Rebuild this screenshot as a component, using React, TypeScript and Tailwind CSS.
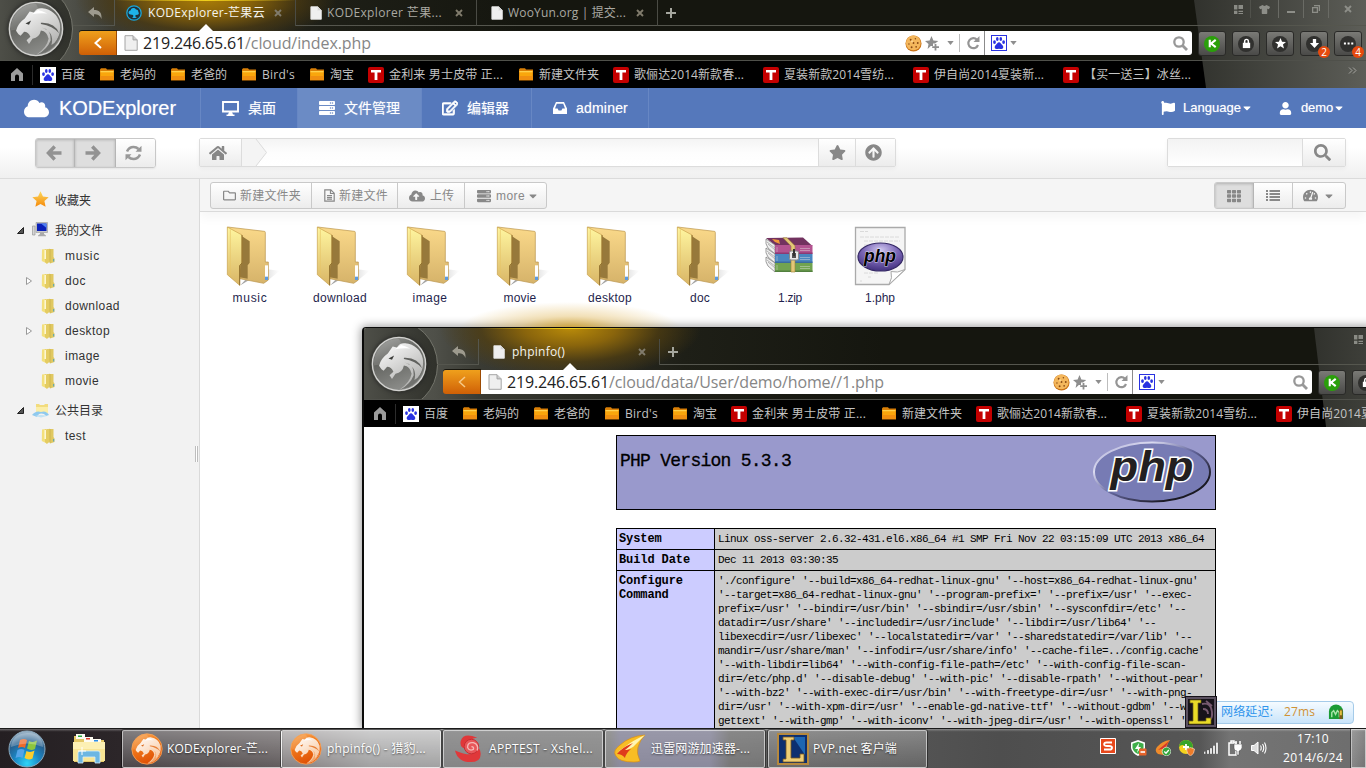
import React, { useLayoutEffect, useRef, useState } from "react";
import {
  FaArrowCircleUp, FaCaretDown, FaCloud, FaCloudUploadAlt, FaFlag, FaHome,
  FaInbox, FaRegEdit, FaRegFolder, FaSearch, FaServer, FaStar,
  FaTachometerAlt, FaTh, FaUser, FaTshirt,
} from "react-icons/fa";

const UI = "font-['Open_Sans','Noto_Sans_CJK_SC',sans-serif]";
const ARIAL = "font-['Liberation_Sans','Noto_Sans_CJK_SC',sans-serif]";

/** One line of text whose letter spacing is adjusted so that it fills a given width. */
function Fit({ w, className = "", children }: { w: number; className?: string; children: string }) {
  const ref = useRef<HTMLSpanElement>(null);
  const [gap, setGap] = useState(0);
  useLayoutEffect(() => {
    const el = ref.current;
    if (!el) return;
    el.style.letterSpacing = "0px";
    const natural = el.getBoundingClientRect().width;
    setGap((w - natural) / Array.from(children).length);
    el.style.letterSpacing = `${(w - natural) / Array.from(children).length}px`;
  }, [w, children]);
  return (
    <span ref={ref} className={`inline-block shrink-0 whitespace-pre ${className}`} style={{ letterSpacing: `${gap}px` }}>
      {children}
    </span>
  );
}

/* ---------- browser icons ---------- */

function BeastLogo({ id, size, orange = false }: { id: string; size: string; orange?: boolean }) {
  return (
    <svg viewBox="0 0 160 160" className={size}>
      <defs>
        <linearGradient id={`${id}a`} x1="0" y1="0" x2="0.4" y2="1">
          <stop offset="0" stopColor={orange ? "#f9b060" : "#a0a19e"} />
          <stop offset="0.45" stopColor={orange ? "#f07a1c" : "#62635f"} />
          <stop offset="1" stopColor={orange ? "#e05206" : "#8a8b88"} />
        </linearGradient>
        <linearGradient id={`${id}b`} x1="0" y1="0" x2="0.6" y2="1">
          <stop offset="0" stopColor="#ffffff" />
          <stop offset="1" stopColor={orange ? "#f8c69c" : "#b0b0ae"} />
        </linearGradient>
      </defs>
      <circle cx="80" cy="80" r="76" fill={`url(#${id}a)`} stroke={orange ? "#f6a55c" : "#d2d2d0"} strokeWidth="4" />
      <path d="M80 8 A72 72 0 0 0 8 84 Q60 80 96 42 Z" fill="#fff" opacity="0.13" />
      <path
        d="M30 95 L23 85 Q28 64 48 50 L62 30 L74 33 Q82 19 98 21 Q138 26 148 64 Q154 104 120 134 Q104 148 82 153 Q112 132 116 108 Q112 86 94 84 Q90 104 70 108 L60 123 L53 112 L64 102 Q58 88 46 88 L36 99 Z"
        fill={`url(#${id}b)`}
      />
      <path d="M94 62 Q134 60 146 92 Q128 72 94 66Z" fill={orange ? "#e8813a" : "#60615e"} />
      <path d="M96 76 Q124 82 122 112 Q112 138 84 153 Q144 142 152 82 Q140 120 124 126 Q134 88 96 76Z" fill={orange ? "#f3a468" : "#70716e"} />
      <path d="M50 64 L66 56 L60 68Z" fill={orange ? "#d9600f" : "#3c3d3a"} />
      <path d="M68 38 L86 26 Q100 30 112 36 Q92 34 68 38Z" fill="#fff" />
    </svg>
  );
}

function PageIcon({ className, stroke = "#8f8f8f" }: { className: string; stroke?: string }) {
  return (
    <svg viewBox="0 0 14 16" className={className}>
      <path d="M1 .7h8l4.2 4.2v10.4H1z" fill="#efefef" stroke={stroke} />
      <path d="M9 .7v4.2h4.2" fill="#cfcfcf" stroke={stroke} />
    </svg>
  );
}

function PawIcon({ boxed = false }: { boxed?: boolean }) {
  return (
    <svg viewBox="0 0 16 16" className="size-4 shrink-0">
      <rect x=".5" y=".5" width="15" height="15" fill="#fff" stroke={boxed ? "#2932e1" : "#fff"} />
      <g fill="#2932e1">
        <ellipse cx="3.5" cy="7.1" rx="1.4" ry="1.9" />
        <ellipse cx="6.3" cy="4" rx="1.3" ry="1.9" />
        <ellipse cx="9.8" cy="4" rx="1.3" ry="1.9" />
        <ellipse cx="12.6" cy="7.1" rx="1.4" ry="1.9" />
        <path d="M8 7.2c1.6 0 1.8 1.6 3.2 2.7 1.5 1.2 1.6 3.6-.6 4-1.1.2-1.6-.2-2.6-.2s-1.5.4-2.6.2c-2.2-.4-2.1-2.800-.6-4C6.200 8.800 6.400 7.200 8 7.200z" />
      </g>
    </svg>
  );
}

function BookFolder() {
  return (
    <svg viewBox="0 0 14 13" className="h-[13px] w-[14px] shrink-0">
      <path d="M0 1.500L1 .3h5l1 1.200h7v11H0z" fill="#d97f06" />
      <path d="M.5 3h13v9H.5z" fill="#f9a60c" />
      <path d="M.5 3h13v1.300H.5z" fill="#ffd04a" />
      <path d="M.5 8h13v4H.5z" fill="#f08f10" />
    </svg>
  );
}

function TIcon() {
  return (
    <span className="flex size-4 shrink-0 items-center justify-center rounded-[2px] bg-[#c40000]">
      <svg viewBox="0 0 10 10" className="size-[10px]"><path d="M0 0h10v2.600H6.400V10H3.600V2.600H0z" fill="#fff" /></svg>
    </span>
  );
}

function CookieIcon() {
  return (
    <svg viewBox="0 0 18 18" className="size-[17px] shrink-0">
      <circle cx="9" cy="9" r="8.500" fill="#c97216" />
      <circle cx="8.800" cy="8.400" r="7.800" fill="#f4b75c" />
      <g fill="#8a4a14">
        <circle cx="6" cy="5" r="1" /><circle cx="11" cy="4" r=".8" /><circle cx="9" cy="8.500" r="1" />
        <circle cx="4.200" cy="9.500" r=".8" /><circle cx="13.500" cy="8.500" r="1" /><circle cx="7" cy="13" r="1" /><circle cx="11.800" cy="12.500" r=".9" />
      </g>
      <circle cx="7.500" cy="6.800" r="1.200" fill="#fbd28c" />
    </svg>
  );
}

function CloseX({ color = "#807b6c" }: { color?: string }) {
  return (
    <svg viewBox="0 0 8 8" className="size-2 shrink-0"><path d="M1 1l6 6M7 1L1 7" stroke={color} strokeWidth="1.900" /></svg>
  );
}

function Down({ className = "" }: { className?: string }) {
  return <svg viewBox="0 0 8 5" className={`h-[4px] w-[7px] shrink-0 ${className}`}><path d="M0 0h8L4 5z" fill="#8e8e8e" /></svg>;
}

function RoundButton({ children, green = false, badge }: { children: React.ReactNode; green?: boolean; badge?: string }) {
  return (
    <div className="relative flex h-[25px] w-7 shrink-0 items-center justify-center rounded-[3px] border border-[#2a2a28] bg-linear-to-b from-[#7a7a76] to-[#4a4a48]">
      <div className={`flex size-[16px] items-center justify-center rounded-full ${green ? "bg-[#2a9f0a]" : "bg-[#30302e]"}`}>
        <svg viewBox="0 0 12 12" className="size-[11px]">{children}</svg>
      </div>
      {badge && (
        <span className="absolute top-[14px] left-[17px] flex size-3 items-center justify-center rounded-full bg-[#e64a0e] font-['Open_Sans',sans-serif] text-[10px] leading-none text-white">
          {badge}
        </span>
      )}
    </div>
  );
}

/* ---------- browser chrome ---------- */

type Tab = { title: string; width: number; kind: "cloud" | "page"; active?: boolean };
type Mark = { title: string; width: number; cell: string; kind: "paw" | "folder" | "t"; inset?: string };

const MARKS: Mark[] = [
  { title: "百度", width: 24, cell: "w-[60px]", kind: "paw" },
  { title: "老妈的", width: 36, cell: "w-[71px]", kind: "folder" },
  { title: "老爸的", width: 36, cell: "w-[71px]", kind: "folder" },
  { title: "Bird's", width: 33, cell: "w-[68px]", kind: "folder" },
  { title: "淘宝", width: 24, cell: "w-[58px]", kind: "folder" },
  { title: "金利来 男士皮带 正...", width: 114, cell: "w-[151px]", kind: "t" },
  { title: "新建文件夹", width: 60, cell: "w-[94px]", kind: "folder" },
  { title: "歌俪达2014新款春...", width: 110, cell: "w-[150px]", kind: "t" },
  { title: "夏装新款2014雪纺...", width: 110, cell: "w-[150px]", kind: "t" },
  { title: "伊自尚2014夏装新...", width: 110, cell: "w-[150px]", kind: "t" },
  { title: "【买一送三】冰丝...", width: 107, cell: "w-[140px]", kind: "t" },
];

function Chrome({ id, tabs, host, hostW, path, pathW, floating = false }: {
  id: string; tabs: Tab[]; host: string; hostW: number; path: string; pathW: number; floating?: boolean;
}) {
  const marks = floating ? MARKS.slice(0, -1) : MARKS;
  return (
    <div className={`relative isolate flex shrink-0 flex-col overflow-hidden bg-[#15160f] ${UI} ${floating ? "h-[99px]" : "h-[88px]"}`}>
      {/* backdrop */}
      <div className={`absolute inset-x-0 top-0 -z-10 bg-[linear-gradient(90deg,#5b5c55_0px,#4f5049_70px,#3a3b34_115px,#1e1f17_320px,#15160f_520px)] ${floating ? "h-[72px]" : "h-[61px]"}`} />
      <div className={`absolute left-[75px] top-0 -z-10 w-[262px] ${floating ? "h-[50px] bg-[radial-gradient(ellipse_50%_100%_at_50%_0,#b98b0a_0%,#8a650c_35%,#54400fb0_68%,transparent_100%)]" : "h-[38px] bg-[radial-gradient(ellipse_50%_115%_at_50%_0,#a87c08_0%,#86610a_35%,#4e3b0fb0_70%,transparent_100%)]"}`} />
      <div className="absolute left-[115px] top-0 -z-10 h-px w-[182px] bg-[linear-gradient(90deg,transparent,#f0cf1c_50%,transparent)]" />
      {/* logo well */}
      <div className={`absolute -z-10 size-[92px] rounded-full border border-[#74756c] bg-linear-to-r from-[#55564f] to-[#30312b] ${floating ? "left-[-18px] top-[-9px]" : "-left-[19px] -top-[17px]"}`} />
      <div className="absolute inset-x-0 bottom-0 -z-10 h-[27px] bg-black" />
      <div className="absolute right-0 top-0 -z-10 h-full w-[172px] bg-linear-to-r from-[#31322d] to-[#5d5e58] [clip-path:polygon(0_0,100%_0,100%_100%,7%_100%)]" />
      <div className="absolute inset-x-0 bottom-[27px] -z-10 h-px bg-[#4f504a]" />
      <div className={`absolute z-10 size-[56px] rounded-full shadow-[0_0_4px_#222] ${floating ? "left-[7px] top-[8px]" : "left-2 top-px"}`}>
        <BeastLogo id={id} size="size-[56px]" />
      </div>

      {/* tab strip */}
      <div className={`flex shrink-0 ${floating ? "h-[37px] pt-[11px]" : "h-[26px]"}`}>
        <div className="ml-[73px] flex w-[42px] items-center justify-center border-r border-b border-[#55564e] pl-[3px]">
          <svg viewBox="0 0 14 12" className="h-3 w-[14px]">
            <path d="M0 5L6 0v3c5 0 8 2 7.500 9C12 8.500 10 7.300 6 7.300V10z" fill="#9d9a8e" />
          </svg>
        </div>
        {tabs.map((t) => (
          <div key={t.title} className={`flex w-[181px] shrink-0 items-center border-r border-[#4a4b44] ${t.active ? "" : "border-b border-b-[#55564e]"}`}>
            {t.kind === "cloud" ? (
              <svg viewBox="0 0 16 16" className="ml-[11px] size-4 shrink-0">
                <circle cx="8" cy="8" r="7.200" fill="#20313a" stroke="#1aa5d8" strokeWidth="1.300" />
                <path d="M4.500 9.500a2 2 0 010-4A3 3 0 0110 4.500a2.400 2.400 0 012.300 2.600A1.500 1.500 0 0111.800 9.700L9.500 10v2l1.500 1H6l1.200-1V10z" fill="#1db2ea" />
              </svg>
            ) : (
              <PageIcon className="ml-[14px] h-[14px] w-3 shrink-0" stroke="#e8e8e8" />
            )}
            <Fit w={t.width} className={`text-[12px] leading-4 ${t.kind === "page" && !floating ? "ml-[5px]" : floating ? "ml-[7px]" : "ml-[6px]"} ${t.active ? "text-[#f4f4f0]" : "text-[#aaa9a2]"}`}>{t.title}</Fit>
            <div className="mr-[13px] ml-auto"><CloseX /></div>
          </div>
        ))}
        <div className="flex grow items-center border-b border-[#55564e] pl-2">
          <svg viewBox="0 0 10 10" className="size-[10px]"><path d="M5 0v10M0 5h10" stroke="#a5a69e" strokeWidth="2" /></svg>
        </div>
      </div>

      {/* window controls */}
      <div className={`absolute right-0 flex items-center ${floating ? "top-[2px]" : "top-0"}`}>
        <div className="flex h-[18px] w-[25px] items-center justify-center border-r border-[#50514b]">
          <svg viewBox="0 0 8 8" className="size-[9px]"><path d="M0 0h3v4H0zM4 0h4v3.500H4zM0 5h3v3H0zM4 5h4v1.200H4zM4 7h4v1H4z" fill="#8a8b85" /></svg>
        </div>
        <div className="flex h-[18px] w-[28px] items-center justify-center border-r border-[#6a6b65] text-[#8d8e88]"><FaTshirt className="size-[11px]" /></div>
        <div className="flex h-[18px] w-[25px] items-center justify-center border-r border-[#6a6b65]"><div className="mt-[6px] h-[2px] w-2 bg-[#8d8e88]" /></div>
        <div className="flex h-[18px] w-[25px] items-center justify-center border-r border-[#6a6b65]">
          <svg viewBox="0 0 8 8" className="size-2"><path d="M2 .6h5.400V6M.6 2.600h4.800v4.800H.6z" fill="none" stroke="#8d8e88" strokeWidth="1.300" /></svg>
        </div>
        <div className="flex h-[18px] w-[37px] items-center justify-center"><CloseX color="#8d8e88" /></div>
      </div>

      {/* address row */}
      <div className="flex h-[35px] shrink-0 pt-[5px]">
        <div className="relative ml-[79px] flex h-6 w-[38px] items-center justify-center rounded-l-[3px] border-r border-[#9c4a03] bg-linear-to-b from-[#efa01c] to-[#cf5f06] shadow-[0_-1px_0_#191710]">
          <svg viewBox="0 0 8 12" className="h-3 w-2"><path d="M7 1L1.500 6L7 11" fill="none" stroke={floating ? "#f6c987" : "#fff"} strokeWidth={floating ? 1.500 : 2} /></svg>
          <svg viewBox="0 0 16 8" className="absolute -top-[7px] left-[119px] h-2 w-4"><path d="M0 8L8 0l8 8z" fill="#fff" /></svg>
        </div>
        <div className="flex h-6 grow items-center rounded-r-[3px] bg-white">
          <PageIcon className="ml-[7px] h-4 w-[14px] shrink-0" stroke="#a4a4a4" />
          <Fit w={hostW} className="ml-[5px] text-[16px] leading-6 text-[#222]">{host}</Fit>
          <Fit w={pathW} className="text-[16px] leading-6 text-[#868686]">{path}</Fit>
          <div className="ml-auto flex h-full items-center">
            <CookieIcon />
            <svg viewBox="0 0 15 15" className="ml-[3px] size-[15px]">
              <path d="M6.500 0l1.900 4.600 4.900.4-3.300 2.500h-2v2.500H5.800L2.600 13l.9-5L0 5l4.600-.4z" fill="#8e8e8e" />
              <path d="M10.500 8v6.500M7.200 11.200H14" stroke="#8e8e8e" strokeWidth="1.800" />
            </svg>
            <Down className="ml-[7px]" />
            <div className="ml-[5px] h-[18px] w-px bg-[#bdbdbd]" />
            <svg viewBox="0 0 14 14" className="ml-[6px] size-[14px]">
              <path d="M11 3.800A5 5 0 1 0 12 9" fill="none" stroke="#959595" strokeWidth="2.200" />
              <path d="M13.500 0v6H7.500z" fill="#959595" />
            </svg>
          </div>
          <div className={`ml-[4px] flex h-full shrink-0 items-center border-l border-[#8b8b8b] ${floating ? "w-[180px]" : "w-[208px]"}`}>
            <div className="ml-[6px]"><PawIcon boxed /></div>
            <Down className="ml-[3px]" />
            <svg viewBox="0 0 15 15" className="mr-[4px] ml-auto size-[15px]">
              <circle cx="6" cy="6" r="4.700" fill="none" stroke="#989898" strokeWidth="2.300" /><path d="M9.500 9.500L14 14" stroke="#989898" strokeWidth="2.800" />
            </svg>
          </div>
        </div>
        <div className="flex gap-[6px] pr-1 pl-[6px]">
          <RoundButton green><path d="M3 2v8M9.500 2L4.500 6l5 4" fill="none" stroke="#fff" strokeWidth="2.300" /></RoundButton>
          <RoundButton><path d="M2 5.200h8V11H2z" fill="#fff" /><path d="M4 6V3.500a2 2 0 014 0V6" fill="none" stroke="#fff" strokeWidth="1.600" /></RoundButton>
          <RoundButton><path d="M6 0l1.700 4 4.300.3-3.300 2.700L9.800 11.500 6 9l-3.800 2.500L3.300 7 0 4.300 4.300 4z" fill="#fff" /></RoundButton>
          <RoundButton badge={floating ? undefined : "2"}><path d="M4.200 1h3.600v4.500H11L6 11 1 5.500h3.200z" fill="#fff" /></RoundButton>
          <RoundButton badge={floating ? undefined : "4"}><path d="M1 5h2.200v2.200H1zM5 5h2.200v2.200H5zM9 5h2.200v2.200H9z" fill="#fff" /></RoundButton>
        </div>
      </div>

      {/* bookmark row */}
      <div className={`relative flex h-[27px] shrink-0 items-center ${floating ? "-ml-px" : ""}`}>
        <svg viewBox="0 0 12 13" className="ml-[11px] h-[13px] w-3 shrink-0"><path d="M6 0l6 5.500V13H8V8.500a2 2 0 00-4 0V13H0V5.500z" fill="#9b9b9b" /></svg>
        <div className="mr-[7px] ml-[9px] h-5 w-px shrink-0 bg-[#2c2c2c]" />
        {marks.map((m) => (
          <div key={m.title} className={`flex shrink-0 items-center ${m.cell}`}>
            {m.kind === "paw" ? <PawIcon /> : m.kind === "folder" ? <BookFolder /> : <TIcon />}
            <Fit w={m.width} className={`text-[12px] leading-4 text-[#c4c4c4] ${m.kind === "folder" ? "ml-[6px]" : "ml-[5px]"}`}>{m.title}</Fit>
          </div>
        ))}
        <svg viewBox="0 0 9 7" className="absolute top-[6px] right-[9px] h-[7px] w-[9px]"><path d="M1 .5l3 3-3 3M5 .5l3 3-3 3" fill="none" stroke="#a5a5a0" /></svg>
      </div>
    </div>
  );
}

/* ---------- file manager ---------- */

function NavBar() {
  const item = "flex h-full shrink-0 items-center border-r border-[#6787c4]";
  return (
    <div className={`flex h-10 shrink-0 items-center bg-[#5578bb] text-[14px] text-white [text-shadow:0_0_1px_rgba(255,255,255,.5)] ${ARIAL}`}>
      <div className={`${item} w-[201px]`}>
        <FaCloud className="ml-6 size-[25px]" />
        <Fit w={117} className="ml-[10px] text-[20px]">KODExplorer</Fit>
      </div>
      <div className={`${item} w-[97px]`}>
        <svg viewBox="0 0 17 15" className="ml-[21px] h-[15px] w-[17px]"><path d="M1 1h15v9.500H1z" fill="none" stroke="#fff" strokeWidth="1.900" /><path d="M7 11h3l1 2.500h1.500V15h-8v-1.500H6z" fill="#fff" /></svg>
        <Fit w={28} className="ml-[9px]">桌面</Fit>
      </div>
      <div className={`${item} w-[124px] bg-[#6b8bc5]`}>
        <FaServer className="ml-[21px] size-[16px]" />
        <Fit w={56} className="ml-[9px]">文件管理</Fit>
      </div>
      <div className={`${item} w-[110px]`}>
        <FaRegEdit className="ml-[20px] size-[16px] stroke-white stroke-[30]" />
        <Fit w={42} className="ml-[9px]">编辑器</Fit>
      </div>
      <div className={`${item} w-[117px]`}>
        <svg viewBox="0 0 14 12" className="ml-[21px] h-3 w-[14px]"><path d="M3 0h8l3 6.500V12H0V6.500zM3.800 1.800L2 6.500h2.600l1 2h2.800l1-2H12L10.200 1.800z" fill="#fff" fillRule="evenodd" /></svg>
        <Fit w={52} className="ml-[9px]">adminer</Fit>
      </div>
      <div className="ml-auto flex items-center pr-[21px] text-[13px]">
        <FaFlag className="size-[14px]" />
        <Fit w={58} className="ml-[8px]">Language</Fit>
        <FaCaretDown className="size-[12px]" />
        <FaUser className="ml-[26px] size-[13px]" />
        <Fit w={32} className="ml-[9px]">demo</Fit>
        <FaCaretDown className="size-[12px]" />
      </div>
    </div>
  );
}

const GREY = "bg-linear-to-b from-white to-[#ececec]";

function ThickArrow({ flip = false }: { flip?: boolean }) {
  return (
    <svg viewBox="0 0 16 16" className={`size-4 ${flip ? "-scale-x-100" : ""}`}>
      <path d="M8.700 1.500L2.500 8l6.200 6.500M3 8h12.500" fill="none" stroke="#929292" strokeWidth="3.500" />
    </svg>
  );
}

function PathBar() {
  return (
    <div className="flex h-[51px] shrink-0 items-start border-b border-[#dcdcdc] bg-linear-to-b from-white from-40% to-[#f0f0f0] pt-[10px] text-[#888]">
      <div className="ml-[35px] flex h-[30px] w-[121px] overflow-hidden rounded-[3px] border border-[#c8c8c8] shadow-[0_1px_2px_#0001] [&>div]:flex [&>div]:flex-1 [&>div]:items-center [&>div]:justify-center">
        <div className="border-r border-[#b5b5b5] bg-[#dedede] pr-[2px] shadow-[inset_0_1px_3px_#0003]"><ThickArrow /></div>
        <div className="border-r border-[#b5b5b5] bg-[#dedede] pr-[3px] shadow-[inset_0_1px_3px_#0003]"><ThickArrow flip /></div>
        <div className={`pr-[3px] ${GREY}`}>
          <svg viewBox="0 0 17 16" className="h-4 w-[17px]">
            <path d="M2 6.500Q4 2 8.500 2q3 0 5 2M15 9.500Q13 14 8.500 14q-3 0-5-2" fill="none" stroke="#999" strokeWidth="2.600" />
            <path d="M16.500 .8v6h-6zM.5 15.200v-6h6z" fill="#999" />
          </svg>
        </div>
      </div>
      <div className="ml-[43px] flex h-[29px] w-[697px] rounded-[2px] border border-[#dcdcdc] shadow-[0_2px_4px_#0000000a]">
        <div className={`flex w-[42px] items-center justify-center border-r border-[#dcdcdc] pr-[5px] ${GREY}`}><FaHome className="size-[18px]" /></div>
        <div className="flex grow bg-linear-to-b from-[#f4f4f4] via-[#fdfdfd] to-white">
          <svg viewBox="0 0 25 27" className="h-[27px] w-[25px]"><path d="M0 0h14l10.500 13.500L14 27H0z" fill="#f4f4f4" /><path d="M14 0l10.500 13.500L14 27" fill="none" stroke="#dcdcdc" /></svg>
        </div>
        <div className={`flex w-[38px] items-center justify-center border-x border-[#dcdcdc] ${GREY}`}><FaStar className="size-[17px]" /></div>
        <div className={`flex w-[39px] items-center justify-center pr-1 ${GREY}`}><FaArrowCircleUp className="size-[17px]" /></div>
      </div>
      <div className="mr-5 ml-auto flex h-[29px] w-[179px] rounded-[2px] border border-[#dcdcdc] shadow-[0_2px_4px_#0000000a]">
        <div className="grow bg-linear-to-b from-[#f3f3f3] to-white" />
        <div className={`flex w-[43px] items-center justify-center border-l border-[#dcdcdc] pr-1 ${GREY}`}><FaSearch className="size-[17px]" /></div>
      </div>
    </div>
  );
}

function SmallFolder() {
  return (
    <svg viewBox="0 0 14 16" className="h-4 w-[14px] shrink-0">
      <path d="M6 1h6.500v8l1 1.500v3.500L9 15.500z" fill="#e0c860" />
      <path d="M1 1.500L5 1v14L.8 13z" fill="#f3e07c" />
      <path d="M4 1.500l5-.8v12.800L5.800 16 4 14z" fill="#e4cc62" />
      <path d="M4.200 2v9" stroke="#fffbe0" strokeWidth="1.400" />
      <path d="M9 1v14" stroke="#c2a848" strokeWidth=".6" />
      <path d="M12 11h1.200v2.500H12z" fill="#67a9ad" />
    </svg>
  );
}

function TreeArrow({ open }: { open: boolean }) {
  return open ? (
    <svg viewBox="0 0 7 7" className="h-[7px] w-[7px] shrink-0"><path d="M6.500 .5v6h-6z" fill="#555" stroke="#222" /></svg>
  ) : (
    <svg viewBox="0 0 6 8" className="h-2 w-[6px] shrink-0"><path d="M.5 .5v7L5.500 4z" fill="#fff" stroke="#999" /></svg>
  );
}

function TreeChild({ name, width, arrow = false }: { name: string; width: number; arrow?: boolean }) {
  return (
    <div className="flex h-[25px] items-center">
      <div className="flex w-[41px] justify-end pr-[9px]">{arrow && <TreeArrow open={false} />}</div>
      <SmallFolder />
      <Fit w={width} className="ml-[10px]">{name}</Fit>
    </div>
  );
}

function Sidebar() {
  return (
    <div className={`relative flex w-[200px] shrink-0 flex-col border-r border-[#dadada] bg-[#f2f2f2] pt-[6px] text-[12px] text-[#333] ${ARIAL}`}>
      <div className="flex h-[30px] items-center">
        <svg viewBox="0 0 16 16" className="-mt-px ml-8 size-[17px] shrink-0">
          <defs><linearGradient id="fav" x1="0" y1="0" x2="0" y2="1"><stop offset="0" stopColor="#fdd85c" /><stop offset="1" stopColor="#f58a0b" /></linearGradient></defs>
          <path d="M8 .3l2.300 4.900 5.400.6-4 3.700 1.100 5.300L8 12.200l-4.800 2.600 1.100-5.300-4-3.700 5.400-.6z" fill="url(#fav)" />
        </svg>
        <Fit w={36} className="mt-[2px] ml-[6px]">收藏夹</Fit>
      </div>
      <div className="flex h-[30px] items-center">
        <div className="ml-[17px]"><TreeArrow open /></div>
        <svg viewBox="0 0 16 15" className="-mt-[2px] ml-2 h-[15px] w-4 shrink-0">
          <path d="M.5 4h2.500v9H.5z" fill="#d5d5d5" stroke="#999" strokeWidth=".7" />
          <path d="M4 .5h11.500v10H4z" fill="#c9c9c9" stroke="#999" strokeWidth=".6" /><path d="M5 1.500h9.500v7.500H5z" fill="#0a1fb8" />
          <path d="M9 1.500h5.500V6z" fill="#4e7ff2" /><path d="M8 10.500h4v1.500l2 1.500v.8H6v-.8l2-1.500z" fill="#aaa" />
        </svg>
        <Fit w={48} className="mt-[2px] ml-[7px]">我的文件</Fit>
      </div>
      <div className="-mt-[2px] flex flex-col pb-[3px]">
        <TreeChild name="music" width={35} />
        <TreeChild name="doc" width={21} arrow />
        <TreeChild name="download" width={55} />
        <TreeChild name="desktop" width={45} arrow />
        <TreeChild name="image" width={35} />
        <TreeChild name="movie" width={34} />
      </div>
      <div className="-mt-px flex h-[30px] items-center">
        <div className="ml-[17px]"><TreeArrow open /></div>
        <svg viewBox="0 0 18 16" className="ml-2 h-4 w-[18px] shrink-0">
          <path d="M4 2h3l1 1h4l1-1h3v9H4z" fill="#f2dc7e" /><path d="M4 5h12v6H4z" fill="#fbeea8" />
          <path d="M0 13q4-5 9-3 5-2 8 3l-3 1-2-2q-3-1-5 0l-2 3z" fill="#8fc9ee" /><path d="M3 14q6-2 12 0l-6 1.500z" fill="#c2e2f4" />
        </svg>
        <Fit w={48} className="mt-px ml-[5px]">公共目录</Fit>
      </div>
      <div className="-mt-[2px]"><TreeChild name="test" width={21} /></div>
      <div className="absolute top-[267px] right-px h-4 w-[3px] border-x border-[#bdbdbd] bg-white" />
    </div>
  );
}

function BigFolder({ id }: { id: string }) {
  return (
    <svg viewBox="0 0 160 180" className="ml-[6px] h-[60px] w-[54px]">
      <defs>
        <linearGradient id={`${id}f`} x1="0" y1="0" x2="0" y2="1"><stop offset="0" stopColor="#fff6a0" /><stop offset="1" stopColor="#d9b565" /></linearGradient>
        <linearGradient id={`${id}g`} x1="0" y1="0" x2="0" y2="1"><stop offset="0" stopColor="#fad98a" /><stop offset="1" stopColor="#d6b36a" /></linearGradient>
        <linearGradient id={`${id}s`} x1="0" y1="0" x2="1" y2="0"><stop offset="0" stopColor="#777" stopOpacity=".75" /><stop offset="1" stopColor="#999" stopOpacity="0" /></linearGradient>
      </defs>
      <path d="M42 178L60 158l56 12 44-36-38-4z" fill={`url(#${id}s)`} />
      <path d="M4 3l110 13q3 0 3 4v88h9v54l-14 10-72-14z" fill={`url(#${id}g)`} stroke="#b8924a" strokeWidth="2" />
      <path d="M46 30l24 16v64l-6 8v40l-24-4z" fill="#97793b" />
      <path d="M3 3l44 24v84l-7 8v59L3 146z" fill={`url(#${id}f)`} stroke="#c79f48" strokeWidth="2" />
      <path d="M12 10v138" stroke="#e7c467" strokeWidth="2" />
      <path d="M47 27v84l-7 8v59" fill="none" stroke="#8d6d2c" strokeWidth="3" />
      <path d="M116 118h9v44h-9z" fill="#fff" /><path d="M116 152h9v10h-9z" fill="#5d9be0" />
    </svg>
  );
}

function ZipIcon() {
  const books = [{ y: 8, top: "#8d3a73", c: "#b35390" }, { y: 17, top: "#3a6c9f", c: "#4a86c0" }, { y: 26, top: "#52803e", c: "#71a350" }];
  return (
    <svg viewBox="0 0 48 37" className="mt-[11px] mr-[2px] h-[37px] w-12">
      <path d="M1 1L38 .5 47.500 9H11z" fill="#72325f" />
      {books.map((b) => (
        <g key={b.y}>
          <path d={`M1 ${b.y - 6}L10 ${b.y}v9L3 ${b.y + 3}q-3-4-2-9z`} fill="#f1f1f1" stroke="#777" strokeWidth=".7" />
          <path d={`M2 ${b.y - 3}l8 6M3 ${b.y - 1}l7 6`} stroke="#999" strokeWidth=".7" />
          <path d={`M10 ${b.y}h37.500v9H10z`} fill={b.c} />
          <path d={`M10 ${b.y + 7.500}h37.500V${b.y + 9}H10z`} fill={b.top} />
          <path d={`M12 ${b.y + 2}v5M35 ${b.y + 3.500}h10M35 ${b.y + 5.500}h10`} stroke="#e5e5e5" strokeWidth=".6" opacity=".7" />
        </g>
      ))}
      <path d="M18 .8h4l8 8V35h-4V9z" fill="#e3c777" stroke="#9c8138" strokeWidth=".6" />
      <path d="M7 2l7 1 1 4-5-2z" fill="#f0983a" />
      <rect x="24.500" y="14" width="9" height="9" rx="1.500" fill="#e8e8e8" stroke="#888" />
      <path d="M27 16h4v5h-4z" fill="#505050" /><path d="M28 12h2v7h-2z" fill="#333" />
    </svg>
  );
}

function PhpFileIcon() {
  return (
    <svg viewBox="0 0 53 60" className="h-[60px] w-[53px]">
      <defs>
        <radialGradient id="phpfile" cx=".5" cy=".25" r=".75"><stop offset="0" stopColor="#cfc7ef" /><stop offset=".5" stopColor="#7d69b8" /><stop offset="1" stopColor="#42307f" /></radialGradient>
      </defs>
      <path d="M1.500 1.500h49.500v42L35 58.500H1.500z" fill="#f5f5f5" stroke="#aaa" strokeWidth="1.300" />
      <path d="M6 5.500h8M6 11h40M10 15h36M10 19h22M10 47h14M14 51h3M6 55h2" stroke="#dadada" strokeWidth="1" strokeDasharray="4 1" />
      <path d="M35 58.500q4-7 2-13 6 2 14-2z" fill="#fff" stroke="#aaa" />
      <ellipse cx="26.500" cy="31" rx="22.500" ry="14" fill="url(#phpfile)" stroke="#362a66" strokeWidth="1.200" />
      <text x="26" y="36" textAnchor="middle" textLength="32" lengthAdjust="spacingAndGlyphs" className="fill-black stroke-white/70 font-['Liberation_Sans',sans-serif] text-[19px] font-bold italic [paint-order:stroke] [stroke-width:1px]">php</text>
    </svg>
  );
}

function FileItem({ name, width, children }: { name: string; width: number; children: React.ReactNode }) {
  return (
    <div className="flex h-[90px] w-[90px] shrink-0 flex-col items-center">
      <div className="h-[65px]">{children}</div>
      <Fit w={width} className="text-[12px] leading-[15px] text-[#1f1f4d]">{name}</Fit>
    </div>
  );
}

const FOLDERS = [
  { name: "music", width: 35 }, { name: "download", width: 54 }, { name: "image", width: 35 },
  { name: "movie", width: 33 }, { name: "desktop", width: 44 }, { name: "doc", width: 20 },
];

function FilePane() {
  return (
    <div className={`flex grow flex-col bg-white ${ARIAL}`}>
      <div className="flex h-[33px] shrink-0 items-start border-b border-[#dadada] bg-[#f5f5f5] pt-[3px] text-[12px] text-[#888] shadow-[0_6px_10px_#0000000a]">
        <div className={`ml-[10px] flex h-[27px] w-[337px] items-center rounded-[3px] border border-[#c9c9c9] [&>div]:flex [&>div]:h-full [&>div]:items-center [&>div]:border-[#c9c9c9] ${GREY}`}>
          <div className="w-[101px] border-r"><FaRegFolder className="ml-3 size-[13px]" /><Fit w={61} className="ml-[4px]">新建文件夹</Fit></div>
          <div className="w-[86px] border-r">
            <svg viewBox="0 0 11 13" className="ml-[12px] h-[13px] w-[11px]"><path d="M.8 .8h6l3.400 3.400v8H.8zM6.500 .8v3.700h3.700M3 6.500h5M3 8.300h5M3 10.100h5" fill="none" stroke="#888" strokeWidth="1.200" /></svg>
            <Fit w={49} className="ml-[4px]">新建文件</Fit>
          </div>
          <div className="w-[67px] border-r"><FaCloudUploadAlt className="ml-[11px] size-[16px]" /><Fit w={24} className="ml-[5px]">上传</Fit></div>
          <div><FaServer className="ml-3 size-[14px]" /><Fit w={29} className="ml-[5px]">more</Fit><FaCaretDown className="ml-[2px] size-[12px]" /></div>
        </div>
        <div className={`mr-5 ml-auto flex h-[27px] w-[132px] overflow-hidden rounded-[3px] border border-[#c9c9c9] [&>div]:flex [&>div]:h-full [&>div]:items-center [&>div]:justify-center ${GREY}`}>
          <div className="w-[39px] border-r border-[#b5b5b5] bg-[#dedede] shadow-[inset_0_1px_3px_#0003]"><FaTh className="size-[14px]" /></div>
          <div className="w-[39px] border-r border-[#c9c9c9]">
            <svg viewBox="0 0 14 11" className="h-[11px] w-[14px]"><path d="M0 0h2v2H0zM3.500 0H14v2H3.500zM0 3h2v2H0zM3.500 3H14v2H3.500zM0 6h2v2H0zM3.500 6H14v2H3.500zM0 9h2v2H0zM3.500 9H14v2H3.500z" fill="#888" /></svg>
          </div>
          <div className="grow gap-[5px]"><FaTachometerAlt className="size-[15px]" /><FaCaretDown className="size-[12px]" /></div>
        </div>
      </div>
      <div className="flex pt-[14px] pl-[5px]">
        {FOLDERS.map((f) => (
          <FileItem key={f.name} name={f.name} width={f.width}><BigFolder id={f.name} /></FileItem>
        ))}
        <FileItem name="1.zip" width={24}><ZipIcon /></FileItem>
        <FileItem name="1.php" width={30}><PhpFileIcon /></FileItem>
      </div>
    </div>
  );
}

/* ---------- phpinfo window ---------- */

const CONFIGURE = [
  "'./configure' '--build=x86_64-redhat-linux-gnu' '--host=x86_64-redhat-linux-gnu'",
  "'--target=x86_64-redhat-linux-gnu' '--program-prefix=' '--prefix=/usr' '--exec-",
  "prefix=/usr' '--bindir=/usr/bin' '--sbindir=/usr/sbin' '--sysconfdir=/etc' '--",
  "datadir=/usr/share' '--includedir=/usr/include' '--libdir=/usr/lib64' '--",
  "libexecdir=/usr/libexec' '--localstatedir=/var' '--sharedstatedir=/var/lib' '--",
  "mandir=/usr/share/man' '--infodir=/usr/share/info' '--cache-file=../config.cache'",
  "'--with-libdir=lib64' '--with-config-file-path=/etc' '--with-config-file-scan-",
  "dir=/etc/php.d' '--disable-debug' '--with-pic' '--disable-rpath' '--without-pear'",
  "'--with-bz2' '--with-exec-dir=/usr/bin' '--with-freetype-dir=/usr' '--with-png-",
  "dir=/usr' '--with-xpm-dir=/usr' '--enable-gd-native-ttf' '--without-gdbm' '--with-",
  "gettext' '--with-gmp' '--with-iconv' '--with-jpeg-dir=/usr' '--with-openssl' '--",
];

function InfoRow({ name, lines, tall = false }: { name: string[]; lines: string[]; tall?: boolean }) {
  return (
    <div className={`flex border-b border-black ${tall ? "grow" : "h-[21px] shrink-0"}`}>
      <div className="w-[98px] shrink-0 border-r border-black bg-[#ccccff] pt-[3px] pl-[2px] text-[12px] font-bold">
        {name.map((n) => <div key={n} className="h-[14px] leading-[14px]"><Fit w={n.length * 7.1}>{n}</Fit></div>)}
      </div>
      <div className="grow bg-[#cccccc] pt-[3px] pl-[3px]">
        {lines.map((l) => <div key={l} className="h-[14px] leading-[14px]"><Fit w={l.length * 6}>{l}</Fit></div>)}
      </div>
    </div>
  );
}

function PhpInfoWindow() {
  return (
    <>
      <div className="absolute top-[327px] left-[362px] h-[401px] w-[1124px] rounded-tl-[4px] shadow-[0_0_10px_1px_#00000068]" />
      <div className="absolute top-[302px] left-[460px] h-[26px] w-[220px] bg-[radial-gradient(ellipse_50%_100%_at_50%_100%,#cf9c1ecc_0%,#dcab3c60_45%,transparent_100%)]" />
      <div className="absolute top-[327px] left-[362px] flex h-[401px] w-[1124px] flex-col overflow-hidden rounded-tl-[4px] border-t border-l-2 border-[#0b0b0a] bg-white">
        <Chrome
          id="beast2"
          floating
          tabs={[{ title: "phpinfo()", width: 53, kind: "page", active: true }]}
          host="219.246.65.61"
          hostW={102}
          path="/cloud/data/User/demo/home//1.php"
          pathW={275}
        />
        <div className="ml-[252px] flex min-h-0 w-[600px] grow flex-col overflow-hidden pt-2 font-['Liberation_Mono',monospace] text-[11px] text-black">
          <div className="flex h-[75px] shrink-0 items-start justify-between border border-black bg-[#9999cc]">
            <Fit w={171} className="mt-[13px] ml-[3px] text-[18px] leading-6 [-webkit-text-stroke:0.3px_black]">PHP Version 5.3.3</Fit>
            <svg viewBox="0 0 120 64" className="mt-[4px] mr-[3px] h-16 w-[120px]">
              <defs>
                <linearGradient id="rim" x1="0" y1="0" x2="1" y2="1"><stop offset="0" stopColor="#a9a9d2" /><stop offset=".25" stopColor="#dadaf0" /><stop offset=".5" stopColor="#62649a" /><stop offset=".8" stopColor="#1b1a24" /><stop offset="1" stopColor="#1b1a24" /></linearGradient>
              </defs>
              <ellipse cx="60" cy="32" rx="58" ry="29.500" fill="#777bb4" stroke="url(#rim)" strokeWidth="2" />
              <text x="60" y="41" textAnchor="middle" textLength="83" lengthAdjust="spacingAndGlyphs" className="fill-[#231f20] stroke-white font-['Liberation_Sans',sans-serif] text-[42px] font-bold italic [paint-order:stroke] [stroke-width:3px]">php</text>
            </svg>
          </div>
          <div className="mt-[18px] flex min-h-0 grow flex-col overflow-hidden border-x border-t border-black">
            <InfoRow name={["System"]} lines={["Linux oss-server 2.6.32-431.el6.x86_64 #1 SMP Fri Nov 22 03:15:09 UTC 2013 x86_64"]} />
            <InfoRow name={["Build Date"]} lines={["Dec 11 2013 03:30:35"]} />
            <InfoRow tall name={["Configure", "Command"]} lines={CONFIGURE} />
          </div>
        </div>
      </div>
    </>
  );
}

/* ---------- desktop ---------- */

function LatencyWidget() {
  return (
    <div className={`absolute top-[696px] left-[1185px] flex h-8 items-center ${UI}`}>
      <svg viewBox="0 0 32 32" className="z-10 size-8">
        <path d="M0 0h32v32H0z" fill="#17131a" /><path d="M2 2h28v28H2z" fill="none" stroke="#5b5160" strokeWidth="2" />
        <path d="M17 8q9-2 10 8t-8 10M18 13q5 0 5 5M21 5l6 5" fill="none" stroke="#76596f" strokeWidth="1.800" />
        <path d="M5 4h11v3h-3v18h8v-3h5v6H4v-3h4V7H5z" fill="#eadb28" stroke="#716314" strokeWidth=".7" />
      </svg>
      <div className="-ml-[3px] flex h-[23px] w-[140px] items-center rounded-[4px] border border-[#a5cbe9] bg-linear-to-b from-[#f5fbff] to-[#c9e4fa]">
        <Fit w={52} className="ml-[6px] text-[12px] text-[#3095ec]">网络延迟:</Fit>
        <Fit w={31} className="ml-[11px] text-[12px] text-[#d09235]">27ms</Fit>
        <svg viewBox="0 0 17 17" className="ml-[13px] size-4">
          <path d="M1 16V8a7.500 7.500 0 0115 0v8z" fill="#1b9b35" /><path d="M4 14V9l2-2 2 4 2-4 2 2v5" fill="none" stroke="#a9e5a9" strokeWidth="1.500" />
          <path d="M12 6h3.500v10H12z" fill="#7e5a1a" /><path d="M13 7h1.500v5H13z" fill="#ffe24c" />
        </svg>
      </div>
    </div>
  );
}

function TaskButton({ title, width, className, children }: { title: string; width: number; className: string; children: React.ReactNode }) {
  return (
    <div className={`flex h-[38px] shrink-0 items-center rounded-[2px] border border-white/55 shadow-[0_0_0_1px_#0006] ${className}`}>
      {children}
      <Fit w={width} className="text-[12px] text-white [text-shadow:0_1px_2px_#0009]">{title}</Fit>
    </div>
  );
}

function Taskbar() {
  return (
    <div className={`relative flex h-10 shrink-0 items-center border-t border-[#1b1b1b] bg-[linear-gradient(180deg,#ffffff55_0px,#ffffff10_2px,transparent_3px),linear-gradient(90deg,#241f22_0px,#2c2629_120px,#4b4445_300px,#6f6f70_370px,#737373_610px,#77768c_620px,#77768c_710px,#606060_730px,#4e4e4e_1000px,#565656_1200px,#747474_1230px,#6d6d6d_1366px)] ${UI}`}>
      <svg viewBox="0 0 38 38" className="ml-2 size-[38px] shrink-0">
        <defs><radialGradient id="orb" cx=".5" cy=".9" r=".9"><stop offset="0" stopColor="#2fd5f7" /><stop offset=".4" stopColor="#1b86c4" /><stop offset=".7" stopColor="#26608f" /><stop offset="1" stopColor="#a7bccd" /></radialGradient></defs>
        <circle cx="19" cy="19" r="18" fill="url(#orb)" stroke="#8ba9bd" />
        <path d="M12 10q4-2 7 0l-2 8q-3-2-7 0z" fill="#ee6a2b" /><path d="M21 11q4 2 8-.5L27 19q-4 2-8-.500z" fill="#8cc63e" />
        <path d="M9.500 20q4-2 7 0l-2 8q-3-2-7 0z" fill="#54a4e8" /><path d="M18.500 21q4 2 8-.5l-2 8q-4 2-8-.500z" fill="#fccd2d" />
        <path d="M3 17Q4 4 19 3t16 14q-16-7-32 0z" fill="#fff" opacity=".25" />
      </svg>
      <svg viewBox="0 0 32 30" className="ml-[27px] h-[30px] w-8 shrink-0">
        <path d="M1 2h9l1 2h8l1 2h11v22H1z" fill="#e4c867" /><path d="M3 0h9v5H3zM11 3h9v5h-9zM19 5h9v4h-9z" fill="#fdfcf2" />
        <path d="M5 1.500h4v1.500H5z" fill="#26a83f" /><path d="M13 4h4v1.500h-4z" fill="#e23b27" /><path d="M21 6h4v1.500h-4z" fill="#2d8ee3" />
        <path d="M0 8h32v19H0z" fill="#f8e594" /><path d="M0 8h32v7H0z" fill="#fcf0b4" />
        <path d="M5 29V19q0-2 2-2h18q2 0 2 2v10h-5v-6H10v6z" fill="#6cb6e2" stroke="#d6eefa" strokeWidth=".8" /><path d="M9 13v8M5 17h8" stroke="#fff" />
      </svg>
      <TaskButton title="KODExplorer-芒..." width={101} className="ml-[17px] w-[160px] bg-linear-to-b from-white/40 to-white/15">
        <div className="mr-[4px] ml-2"><BeastLogo id="task1" size="size-8" orange /></div>
      </TaskButton>
      <TaskButton title="phpinfo() - 猎豹..." width={99} className="-ml-px w-[160px] bg-linear-to-b from-white/65 to-white/35">
        <div className="mr-[5px] ml-2"><BeastLogo id="task2" size="size-8" orange /></div>
      </TaskButton>
      <TaskButton title="APPTEST - Xshel..." width={104} className="ml-[2px] w-[160px] bg-linear-to-b from-white/25 to-white/15">
        <svg viewBox="0 0 30 30" className="mr-[6px] ml-[10px] size-[29px]">
          <path d="M24 4Q10-2 7 7q-2 8 8 9 6 1 4 4-3 3-18-3Q4 29 17 29q13 0 10-12-2-5-9-6-4-1-3-3 2-3 9-4z" fill="#e0383a" />
          <circle cx="18" cy="13" r="7.500" fill="#e8575a" stroke="#c62d31" /><path d="M18 13q3 0 2 3-4 2-6-2 0-6 6-5 6 2 4 8" fill="none" stroke="#f5b7b5" strokeWidth="1.400" />
        </svg>
      </TaskButton>
      <TaskButton title="迅雷网游加速器-..." width={99} className="ml-[2px] w-[160px] bg-linear-to-b from-white/25 to-white/15">
        <svg viewBox="0 0 32 29" className="mr-[5px] ml-[8px] h-[29px] w-8"><path d="M31 1Q16 2 6 11-2 17 2 22q3 6 18 6 4 0 6-1-4-8-2-14 2-7 7-12z" fill="#f8bd24" stroke="#dd8f10" strokeWidth=".7" /><path d="M31 1Q18 7 12 12l-7 5q-1 2 0 3l14-7z" fill="#fff5b3" /><path d="M3 20q4-6 16-11-4 4-8 7 3 0 6-1-5 4-6 9-3-4-8-4z" fill="#df3b1c" /></svg>
      </TaskButton>
      <TaskButton title="PVP.net 客户端" width={84} className="ml-[3px] w-[159px] bg-linear-to-b from-white/30 to-white/10">
        <svg viewBox="0 0 32 32" className="mr-[4px] ml-[8px] size-8"><path d="M0 0h32v32H0z" fill="#b5893e" /><path d="M2 2h28v28H2z" fill="#0d2f70" /><path d="M16 4h12v18z" fill="#1e66b2" /><path d="M6 4h11v3h-3v18h9v-4h4v8H6v-3h3V7H6z" fill="#edcd75" stroke="#7a5620" strokeWidth=".8" /></svg>
      </TaskButton>
      <div className="ml-auto flex items-center pb-[1px]">
        <svg viewBox="0 0 16 16" className="mb-[4px] size-4"><path d="M.5 .5h15v15H.5z" fill="#e8481c" stroke="#fff" /><path d="M12 4.500H6.500Q4 4.500 4.200 6.500 4.300 8 7 8h2q3 0 3 1.800t-2.500 1.700H4" fill="none" stroke="#fff" strokeWidth="1.900" /></svg>
        <svg viewBox="0 0 16 16" className="ml-[15px] size-4"><path d="M7 0l7 2.500V8q-1 5-7 8-6-3-7-8V2.500z" fill="#fff" /><path d="M7 1.800l5.500 2V8q-1 4-5.500 6Q2.500 12 1.500 8V3.800z" fill="#3fae49" /><path d="M8 3L4 9h3l-1 4 4-6H7.500z" fill="#fff" /><rect x="8" y="8.500" width="7.500" height="7" rx="1" fill="#e6632a" /><path d="M9.500 12h4.500" stroke="#fff" strokeWidth="1.600" /></svg>
        <svg viewBox="0 0 16 16" className="ml-[8px] size-4"><path d="M15 0Q7 1 2 7q-3 4 1 7 4 1 8 1-1-8 4-15z" fill="#f08b2a" /><path d="M14 1L3 10l7-2z" fill="#d8352a" /><circle cx="11.500" cy="11.500" r="4.300" fill="#35a53b" stroke="#fff" strokeWidth=".6" /><path d="M9.300 11.500l1.700 1.700 2.800-3.200" fill="none" stroke="#fff" strokeWidth="1.300" /></svg>
        <svg viewBox="0 0 16 16" className="ml-[8px] size-4"><circle cx="7" cy="7" r="7" fill="#f3d31e" /><path d="M0 7a7 7 0 0114 0q-4 5-7 0-4-4-7 0z" fill="#37a42a" /><path d="M7 4v6M4 7h6" stroke="#fff" strokeWidth="1.800" /><path d="M11.500 7.500l4 1.500q0 5-4 7-4-2-4-7z" fill="#ee7c29" stroke="#fff" strokeWidth=".5" /></svg>
        <svg viewBox="0 0 16 12" className="ml-[8px] h-3 w-4"><path d="M1 9.500h1.500V12H1zM4 8h2v4H4zM7 6h2v6H7zM10 3.500h2V12h-2zM13 .5h2V12h-2z" fill="#fff" stroke="#444" strokeWidth=".3" /></svg>
        <svg viewBox="0 0 14 16" className="ml-[9px] h-4 w-[14px]"><path d="M1 3h7v12H1zM3 1h3v2H3z" fill="none" stroke="#fff" strokeWidth="1.500" /><path d="M6 4h8v4q-1 3-3 3v4H9v-4q-3 0-3-3z" fill="#fff" stroke="#444" strokeWidth=".5" /><path d="M8 1v3M12 1v3" stroke="#fff" strokeWidth="1.500" /></svg>
        <svg viewBox="0 0 16 14" className="ml-[9px] h-[14px] w-4"><path d="M.5 4.500H3L7 1v12L3 9.500H.5z" fill="#ddd" stroke="#fff" /><path d="M9.500 4.500q1.500 2.500 0 5M11.500 3q2.500 4 0 8M13.500 1.500q3 5.500 0 11" fill="none" stroke="#fff" strokeWidth="1.100" /></svg>
        <div className="ml-[16px] flex w-[60px] flex-col items-center text-[12px] leading-[19px] text-white">
          <Fit w={32}>17:10</Fit>
          <Fit w={60}>2014/6/24</Fit>
        </div>
        <div className="-mb-px ml-[8px] h-[39px] w-[15px] border border-white/50 bg-linear-to-br from-white/30 to-white/5 shadow-[-1px_0_0_#2229]" />
      </div>
    </div>
  );
}

export default function App() {
  return (
    <div className="relative flex h-[768px] w-[1366px] flex-col overflow-hidden bg-white leading-normal">
      <Chrome
        id="beast1"
        tabs={[
          { title: "KODExplorer-芒果云", width: 117, kind: "cloud", active: true },
          { title: "KODExplorer 芒果...", width: 115, kind: "page" },
          { title: "WooYun.org | 提交...", width: 118, kind: "page" },
        ]}
        host="219.246.65.61"
        hostW={102}
        path="/cloud/index.php"
        pathW={126}
      />
      <NavBar />
      <PathBar />
      <div className="flex min-h-0 grow">
        <Sidebar />
        <FilePane />
      </div>
      <PhpInfoWindow />
      <LatencyWidget />
      <Taskbar />
    </div>
  );
}
